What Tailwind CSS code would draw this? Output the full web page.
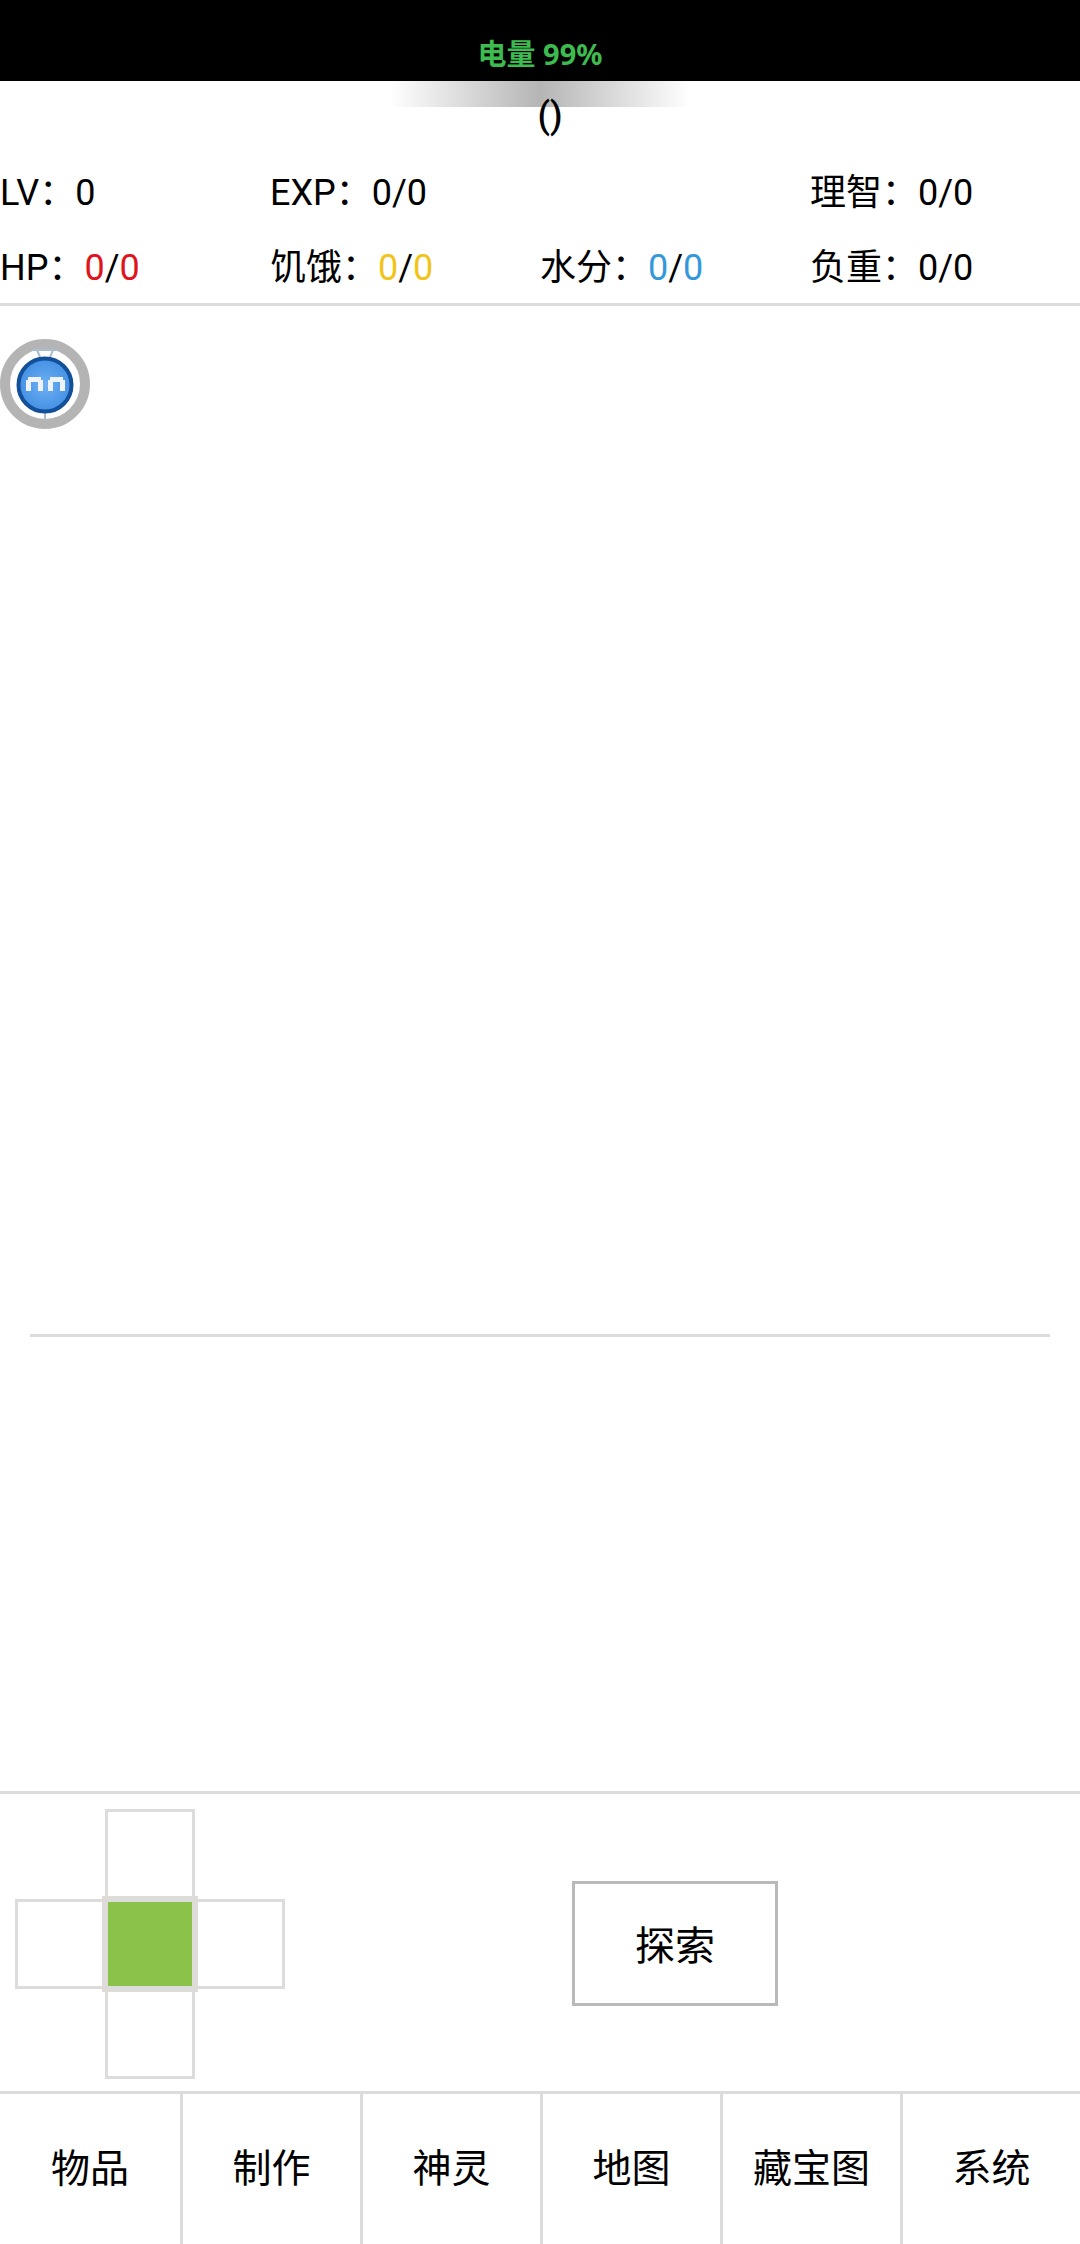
<!DOCTYPE html>
<html lang="zh">
<head>
<meta charset="utf-8">
<script src="https://cdn.jsdelivr.net/npm/@tailwindcss/browser@4"></script>
</head>
<body class="bg-white">
<div class="w-[1080px] h-[2244px] flex flex-col overflow-hidden bg-white text-black font-['Roboto','Noto_Sans_CJK_SC',sans-serif]">
  <header class="h-[81px] bg-black flex justify-center items-end shrink-0 pb-[9px]">
    <span class="text-[29px] leading-[36px] font-bold text-[#3dbb4f] font-['Noto_Sans','Noto_Sans_CJK_SC',sans-serif]">电量 99%</span>
  </header>
  <div class="h-[26px] w-[300px] mx-auto shrink-0 bg-[linear-gradient(to_right,#fff,#b5b5b5_50%,#fff)]"></div>
  <div class="h-[40px] -mt-[11px] shrink-0 flex justify-center pl-[20px] text-[36px] leading-[40px] font-medium">()</div>

  <section class="grid grid-cols-4 h-[170px] shrink-0 border-b-[3px] border-[#dcdcdc] pt-[20px] text-[36px] leading-[75px] auto-rows-[75px]">
    <div>LV：0</div>
    <div>EXP：0/0</div>
    <div></div>
    <div>理智：0/0</div>
    <div>HP：<span class="text-[#e0141c]">0</span>/<span class="text-[#e0141c]">0</span></div>
    <div>饥饿：<span class="text-[#f1c419]">0</span>/<span class="text-[#f1c419]">0</span></div>
    <div>水分：<span class="text-[#3498db]">0</span>/<span class="text-[#3498db]">0</span></div>
    <div>负重：0/0</div>
  </section>

  <section class="h-[1028px] shrink-0 pt-[33px]">
    <svg class="block" width="90" height="90" viewBox="0 0 90 90" xmlns="http://www.w3.org/2000/svg">
      <defs>
        <radialGradient id="b" cx="50%" cy="50%" r="55%">
          <stop offset="0" stop-color="#6fb0f4"/>
          <stop offset="1" stop-color="#3f8de2"/>
        </radialGradient>
      </defs>
      <circle cx="45" cy="45" r="40" fill="#fff" stroke="#b4b4b4" stroke-width="10"/>
      <path d="M32 11H58M37 11L40 18M53 11L50 18" stroke="#a8bdd0" stroke-width="2" fill="none"/>
      <path d="M45 74V81" stroke="#a8bdd0" stroke-width="2" fill="none"/>
      <circle cx="45" cy="46" r="26.500" fill="url(#b)" stroke="#125099" stroke-width="4"/>
      <path d="M26 52V41H28V38H41V41H43V52H38V43H31V52ZM48 52V41H50V38H63V41H65V52H60V43H53V52Z" fill="#eef3fa"/>
    </svg>
  </section>

  <div class="mx-[30px] h-[3px] bg-[#dcdcdc] shrink-0"></div>
  <div class="flex-1 min-h-0"></div>

  <section class="h-[300px] shrink-0 border-t-[3px] border-[#dcdcdc] flex">
    <div class="w-[572px] shrink-0 pl-[15px] pt-[15px]">
      <div class="grid grid-cols-[90px_90px_90px] grid-rows-[90px_90px_90px] w-[270px] h-[270px]">
        <div class="col-start-2 row-start-1 border-[3px] border-[#dcdcdc]"></div>
        <div class="col-start-1 row-start-2 border-[3px] border-[#dcdcdc]"></div>
        <div class="col-start-3 row-start-2 border-[3px] border-[#dcdcdc]"></div>
        <div class="col-start-2 row-start-3 border-[3px] border-[#dcdcdc]"></div>
        <div class="col-start-2 row-start-2 -m-[3px] border-[6px] border-[#dedcd8] bg-[#8bc34a] relative"></div>
      </div>
    </div>
    <div class="pt-[87px]">
      <div class="w-[206px] h-[125px] border-[3px] border-[#b9b9b9] flex items-center justify-center text-[40px] pt-[6px]">探索</div>
    </div>
  </section>

  <nav class="h-[153px] shrink-0 border-t-[3px] border-[#dcdcdc] grid grid-cols-6 text-[39px]">
    <div class="flex items-center justify-center">物品</div>
    <div class="border-l-[3px] border-[#dcdcdc] flex items-center justify-center">制作</div>
    <div class="border-l-[3px] border-[#dcdcdc] flex items-center justify-center">神灵</div>
    <div class="border-l-[3px] border-[#dcdcdc] flex items-center justify-center">地图</div>
    <div class="border-l-[3px] border-[#dcdcdc] flex items-center justify-center">藏宝图</div>
    <div class="border-l-[3px] border-[#dcdcdc] flex items-center justify-center">系统</div>
  </nav>
</div>
</body>
</html>
